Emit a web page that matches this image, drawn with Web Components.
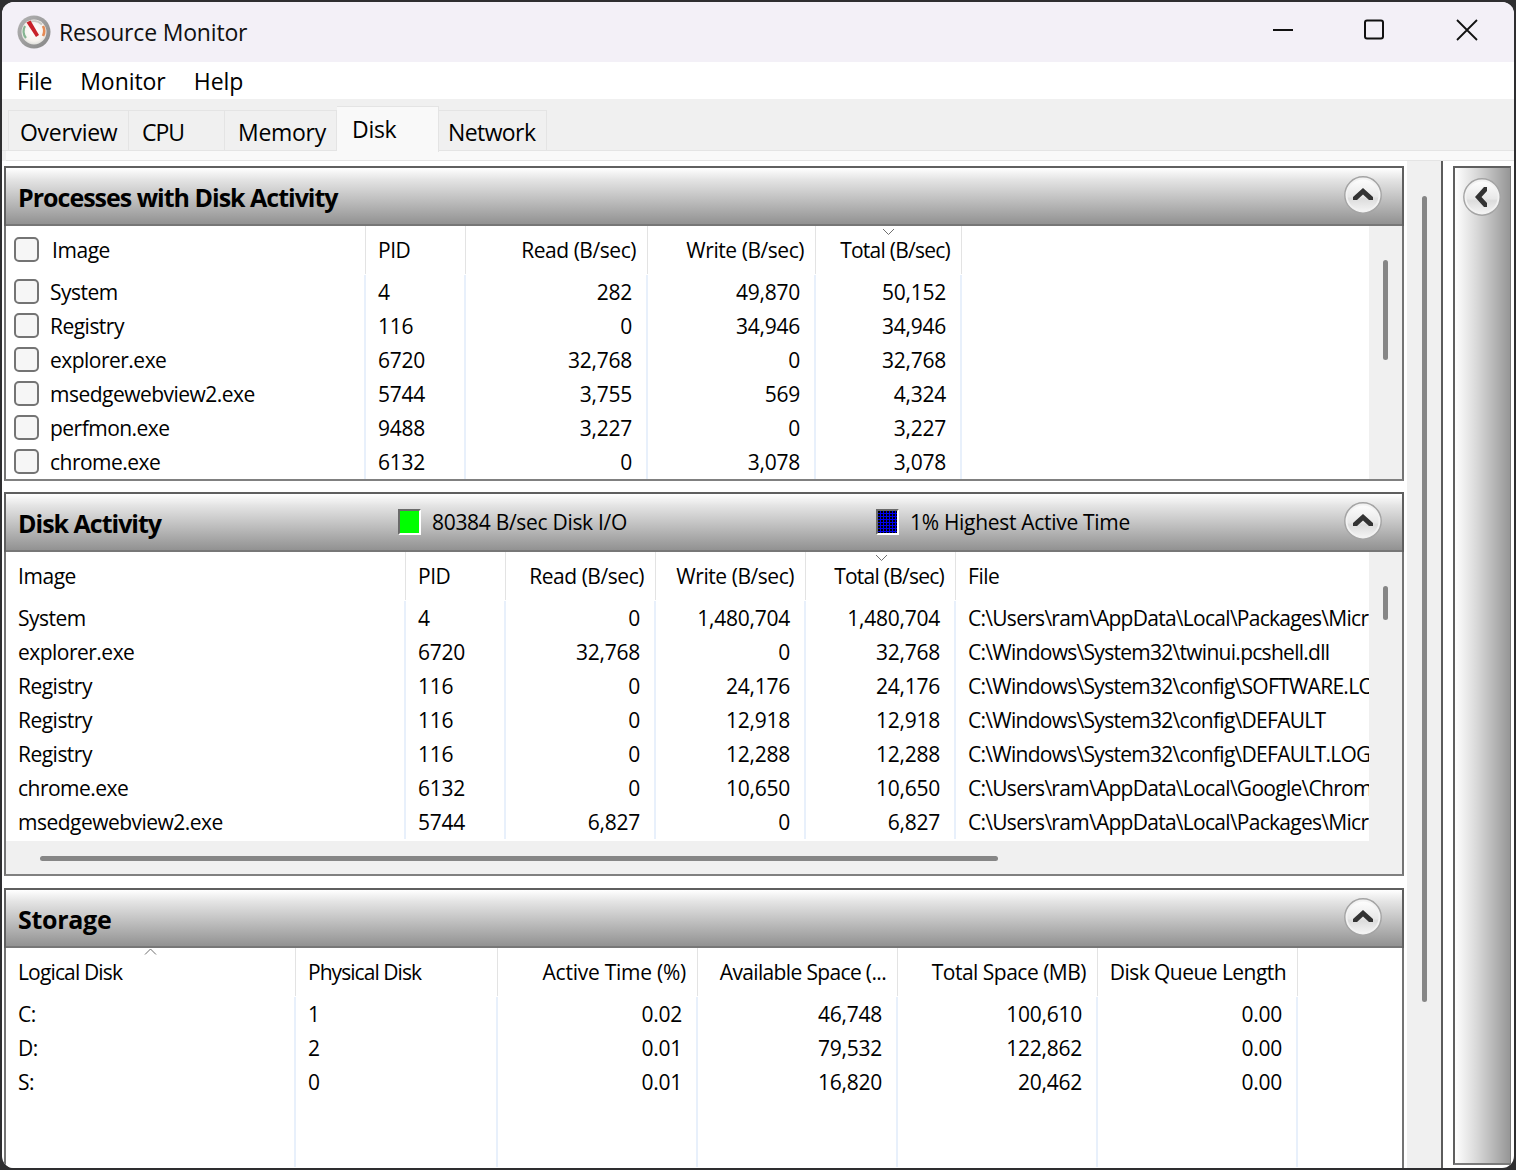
<!DOCTYPE html>
<html lang="en">
<head>
<meta charset="utf-8">
<title>Resource Monitor</title>
<style>
  html, body { margin: 0; height: 100%; background: #2e2e30; overflow: hidden; }
  body { font-family: "Open Sans", "Noto Sans", sans-serif; color: #000; }
</style>
</head>
<body>
<rm-window>
  <rm-titlebar slot="title">Resource Monitor</rm-titlebar>
  <rm-menubar slot="menu"></rm-menubar>
  <rm-tabs slot="tabs"></rm-tabs>

  <rm-panel style="height:315px" heading="Processes with Disk Activity">
    <rm-table id="processes" checks thumb-top="34" thumb-size="100"></rm-table>
  </rm-panel>

  <rm-panel style="height:384px; margin-top:11px" heading="Disk Activity">
    <rm-legend slot="legend" color="green" style="width:478px">80384 B/sec Disk I/O</rm-legend>
    <rm-legend slot="legend" color="blue">1% Highest Active Time</rm-legend>
    <rm-table id="activity" thumb-top="34" thumb-size="34" hscroll></rm-table>
  </rm-panel>

  <rm-panel style="flex:1; margin-top:12px" heading="Storage" heading-spacing="-.3" open-bottom>
    <rm-table id="storage"></rm-table>
  </rm-panel>
</rm-window>

<script>
class RmWindow extends HTMLElement {
  constructor() {
    super();
    this.attachShadow({ mode: 'open' });
    this.shadowRoot.innerHTML = `
      <style>
        :host {
          display: flex;
          flex-direction: column;
          width: 1512px;
          height: 1166px;
          margin: 2px 0 0 2px;
          background: #fff;
          border-radius: 12px;
          overflow: hidden;
        }
        .main { flex: 1; display: flex; min-height: 0; }
        .panels {
          flex: none;
          width: 1400px;
          margin: 5px 0 0 2px;
          display: flex;
          flex-direction: column;
          min-height: 0;
        }
        .outer-scroll {
          flex: none;
          width: 34px;
          margin-left: 3px;
          background: #f0f0f0;
          border-right: 2px solid #5c5c5c;
          display: flex;
          justify-content: center;
        }
        .outer-scroll i {
          display: block;
          width: 5px;
          height: 806px;
          margin-top: 35px;
          background: #868686;
          border-radius: 3px;
        }
        .side {
          flex: 1;
          margin: 5px 3px 3px 10px;
          border: 2px solid #5f5f5f;
          border-right: 1px solid #7a7a7a;
          border-bottom-color: #7a7a7a;
          background: linear-gradient(to right, #fff 0%, #d8d8d8 40%, #969696 100%);
          display: flex;
          justify-content: center;
          padding: 10px 2px 0 0;
          align-items: flex-start;
        }
      </style>
      <slot name="title"></slot>
      <slot name="menu"></slot>
      <slot name="tabs"></slot>
      <div class="main">
        <div class="panels"><slot></slot></div>
        <div class="outer-scroll"><i></i></div>
        <div class="side"><rm-round-button direction="left"></rm-round-button></div>
      </div>
    `;
  }
}

class RmTitlebar extends HTMLElement {
  constructor() {
    super();
    this.attachShadow({ mode: 'open' });
    this.shadowRoot.innerHTML = `
      <style>
        :host {
          display: flex;
          align-items: center;
          height: 60px;
          background: #f3f0f7;
          font-size: 23px;
        }
        .icon { flex: none; margin: 0 7px 0 14px; }
        .text { flex: 1; letter-spacing: -.18px; color: #111; }
        .controls { display: flex; align-items: center; margin-right: 1px; }
        button {
          all: unset;
          display: flex;
          justify-content: center;
          align-items: center;
          width: 92px;
          height: 56px;
          margin-bottom: 4px;
        }
        .max { position: relative; left: -1px; }
      </style>
      <svg class="icon" width="36" height="36" viewBox="0 0 36 36">
        <defs>
          <linearGradient id="ring" x1="0" y1="0" x2="1" y2="1">
            <stop offset="0" stop-color="#b4b4b4"/>
            <stop offset="1" stop-color="#868686"/>
          </linearGradient>
          <radialGradient id="face" cx=".5" cy=".45" r=".6">
            <stop offset="0" stop-color="#fff"/>
            <stop offset=".7" stop-color="#f6f2ee"/>
            <stop offset="1" stop-color="#d6d8d4"/>
          </radialGradient>
        </defs>
        <circle cx="18" cy="18" r="16.5" fill="url(#ring)"/>
        <circle cx="18" cy="18" r="12.5" fill="url(#face)"/>
        <path d="M9 12a11 11 0 0 0 1 12" fill="none" stroke="#86b592" stroke-width="2.2"/>
        <path d="M13 8.5a11 11 0 0 1 13 2" fill="none" stroke="#c9c9c4" stroke-width="2"/>
        <path d="M27 12a11 11 0 0 1 0 10" fill="none" stroke="#e58a55" stroke-width="2.6"/>
        <path d="M10.5 8.5 L14.5 6.5 L23 21 L20 23 Z" fill="#c8222a"/>
      </svg>
      <span class="text"><slot></slot></span>
      <div class="controls">
        <button aria-label="Minimize">
          <svg width="22" height="22" viewBox="0 0 22 22"><path d="M1 11h20" stroke="#111" stroke-width="2"/></svg>
        </button>
        <button class="max" aria-label="Maximize">
          <svg width="22" height="22" viewBox="0 0 22 22"><rect x="2" y="1.5" width="18" height="18" rx="2" fill="none" stroke="#111" stroke-width="2"/></svg>
        </button>
        <button aria-label="Close">
          <svg width="22" height="22" viewBox="0 0 22 22"><path d="M1 1l20 20M21 1L1 21" stroke="#111" stroke-width="1.8"/></svg>
        </button>
      </div>
    `;
  }
}

class RmMenubar extends HTMLElement {
  constructor() {
    super();
    this.attachShadow({ mode: 'open' });
    this.shadowRoot.innerHTML = `
      <style>
        :host {
          display: flex;
          align-items: center;
          gap: 28px;
          height: 37px;
          padding-left: 15px;
          background: #fff;
          font-size: 23px;
          letter-spacing: -.05px;
        }
        .file { letter-spacing: -.3px; }
      </style>
      <span class="file">File</span><span>Monitor</span><span>Help</span>
    `;
  }
}

class RmTabs extends HTMLElement {
  #tabs = [
    { label: 'Overview', width: 121, pad: 11, spacing: -.3 },
    { label: 'CPU', width: 96, pad: 13, spacing: -1 },
    { label: 'Memory', width: 112, pad: 13, spacing: -.3 },
    { label: 'Disk', width: 102, pad: 15, spacing: -.3, active: true },
    { label: 'Network', width: 108, pad: 9, spacing: -.6 },
  ];

  constructor() {
    super();
    this.attachShadow({ mode: 'open' });
    const tabs = this.#tabs.map((t) => `
      <div class="tab${t.active ? ' active' : ''}" style="width:${t.width}px;padding-left:${t.pad}px;letter-spacing:${t.spacing}px">${t.label}</div>
    `).join('');
    this.shadowRoot.innerHTML = `
      <style>
        :host {
          display: block;
          background: #f0f0f0;
          font-size: 23px;
        }
        .strip {
          display: flex;
          align-items: flex-end;
          height: 52px;
          padding-left: 6px;
          box-sizing: border-box;
          border-bottom: 1px solid #e4e4e4;
        }
        .tab {
          box-sizing: border-box;
          height: 40px;
          padding-top: 4px;
          line-height: 34px;
          border: 1px solid #e4e4e4;
          border-bottom: 0;
          white-space: nowrap;
        }
        .tab + .tab { border-left: 0; }
        .active {
          height: 46px;
          margin-bottom: -2px;
          padding-top: 5px;
          background: #f9f9f9;
          position: relative;
          border-left: 1px solid #e4e4e4;
        }
        .page {
          height: 9px;
          margin: 0 0 0 4px;
          background: #f9f9f9;
          border-bottom: 1px solid #e4e4e4;
        }
      </style>
      <div class="strip">${tabs}</div>
      <div class="page"></div>
    `;
  }
}

class RmRoundButton extends HTMLElement {
  constructor() {
    super();
    this.attachShadow({ mode: 'open' });
    const turn = this.getAttribute('direction') === 'left' ? 'rotate(-90 19 19)' : '';
    this.shadowRoot.innerHTML = `
      <style>
        :host { display: block; width: 38px; height: 38px; flex: none; }
        svg { display: block; }
      </style>
      <svg width="38" height="38" viewBox="0 0 38 38">
        <defs>
          <linearGradient id="b" x1="0" y1="0" x2="0" y2="1">
            <stop offset="0" stop-color="#fdfdfd"/>
            <stop offset=".55" stop-color="#e8e8e8"/>
            <stop offset=".62" stop-color="#dcdcdc"/>
            <stop offset="1" stop-color="#f2f2f2"/>
          </linearGradient>
        </defs>
        <circle cx="19" cy="19" r="18.2" fill="#f2f2f2" stroke="#a4a4a4" stroke-width="1.4"/>
        <circle cx="19" cy="19" r="15.6" fill="url(#b)"/>
        <path transform="${turn}" d="M19 12 L29 21 L29 24 L25 24 L19 18.5 L13 24 L9 24 L9 21 Z" fill="#333"/>
      </svg>
    `;
  }
}

class RmLegend extends HTMLElement {
  constructor() {
    super();
    this.attachShadow({ mode: 'open' });
    const blue = this.getAttribute('color') === 'blue';
    const fill = blue
      ? 'background: radial-gradient(circle at 1px 1px, #000 .9px, transparent 1px) 0 0/3px 3px, #0000f0;'
      : 'background: #00ff00;';
    this.shadowRoot.innerHTML = `
      <style>
        :host {
          display: flex;
          align-items: center;
          gap: 11px;
          font-size: 21px;
          letter-spacing: -.3px;
          white-space: nowrap;
        }
        .swatch {
          width: 19px;
          height: 22px;
          border: 2px solid;
          border-color: #6a6a6a #fff #fff #6a6a6a;
          ${fill}
        }
      </style>
      <span class="swatch"></span><span><slot></slot></span>
    `;
  }
}

class RmPanel extends HTMLElement {
  constructor() {
    super();
    this.attachShadow({ mode: 'open' });
    const bottom = this.hasAttribute('open-bottom') ? '0' : '2px solid #808080';
    const spacing = this.getAttribute('heading-spacing') || '-1';
    this.shadowRoot.innerHTML = `
      <style>
        :host {
          display: flex;
          flex-direction: column;
          box-sizing: border-box;
          min-height: 0;
          border-left: 2px solid #747474;
          border-right: 2px solid #747474;
          border-bottom: ${bottom};
        }
        header {
          flex: none;
          display: grid;
          grid-template-columns: 380px 1fr 38px;
          align-items: center;
          box-sizing: border-box;
          height: 60px;
          margin: 0 -2px;
          padding: 0 20px 4px 12px;
          border: 2px solid #5f5f5f;
          border-width: 2px 2px 0;
          background: linear-gradient(#fff, #e4e4e4 20%, #b4b4b4 65%, #8e8e8e);
          box-shadow: inset 0 -2px 0 #777;
        }
        h2 {
          margin: 0;
          font-size: 25px;
          font-weight: 700;
          letter-spacing: ${spacing}px;
          white-space: nowrap;
          position: relative;
          top: 2px;
        }
        .legend { display: flex; position: relative; top: 1px; }
        .body { flex: 1; display: flex; min-height: 0; }
        ::slotted(rm-table) { flex: 1; }
      </style>
      <header>
        <h2>${this.getAttribute('heading')}</h2>
        <div class="legend"><slot name="legend"></slot></div>
        <rm-round-button></rm-round-button>
      </header>
      <div class="body"><slot></slot></div>
    `;
  }
}

class RmCheckbox extends HTMLElement {
  constructor() {
    super();
    this.attachShadow({ mode: 'open' });
    this.shadowRoot.innerHTML = `
      <style>
        :host {
          display: block;
          box-sizing: border-box;
          flex: none;
          width: 25px;
          height: 25px;
          margin-top: -2px;
          background: #f6f6f6;
          border: 2px solid #747474;
          border-radius: 5px;
        }
      </style>
    `;
  }
}

class RmTable extends HTMLElement {
  #data;

  constructor() {
    super();
    this.attachShadow({ mode: 'open' });
  }

  set data(value) {
    this.#data = value;
    this.#render();
  }

  get #style() {
    return `
      <style>
        :host {
          display: grid;
          grid-template-columns: 1fr auto;
          grid-template-rows: 1fr auto;
          min-height: 0;
          font-size: 21px;
          letter-spacing: -.52px;
          background: #fff;
        }
        .view { overflow: hidden; min-width: 0; }
        .row { display: flex; height: 34px; }
        .row.head { height: 49px; }
        .cell {
          box-sizing: border-box;
          flex: none;
          display: flex;
          align-items: center;
          height: 100%;
          padding: 0 14px 0 12px;
          white-space: nowrap;
          overflow: hidden;
          border-right: 2px solid #e8f0fb;
          position: relative;
        }
        .num { letter-spacing: -.25px; }
        .head .cell {
          height: 48px;
          padding: 0 11px 0 12px;
          border-right: 1px solid #e3e3e3;
          letter-spacing: -.45px;
        }
        .right { justify-content: flex-end; }
        .check { padding-left: 8px; gap: 11px; }
        .head .check { padding-left: 8px; gap: 13px; }
        .sort { position: absolute; }
        .vbar {
          width: 33px;
          background: #f0f0f0;
          display: flex;
          justify-content: center;
        }
        .vbar i {
          display: block;
          width: 5px;
          background: #868686;
          border-radius: 3px;
        }
        .hbar {
          grid-column: 1 / 3;
          height: 33px;
          background: #f0f0f0;
          display: flex;
          align-items: center;
        }
        .hbar i {
          display: block;
          width: 958px;
          height: 5px;
          margin: 1px 0 0 34px;
          background: #868686;
          border-radius: 3px;
        }
      </style>
    `;
  }

  #sortMark(col) {
    if (!col.sort) return '';
    const up = col.sort === 'up';
    const d = up ? 'M1 6.5 L6.5 1 L12 6.5' : 'M1 1 L6.5 6.5 L12 1';
    return `<svg class="sort" style="left:${col.sortAt}px;top:${up ? 0 : 2}px" width="13" height="8" viewBox="0 0 13 8"><path d="${d}" fill="none" stroke="#6f6f6f" stroke-width="1"/></svg>`;
  }

  #cell(col, text, isHead, first) {
    const check = first && this.hasAttribute('checks');
    const cls = ['cell'];
    if (col.right) cls.push('right');
    if (col.right || col.num) cls.push('num');
    if (check) cls.push('check');
    const box = check ? '<rm-checkbox></rm-checkbox>' : '';
    const mark = isHead ? this.#sortMark(col) : '';
    let style = `width:${col.width}px`;
    if (isHead && col.headSpacing) style += `;letter-spacing:${col.headSpacing}px`;
    if (!isHead && col.spacing) style += `;letter-spacing:${col.spacing}px`;
    return `<div class="${cls.join(' ')}" style="${style}">${box}<span>${text}</span>${mark}</div>`;
  }

  get #template() {
    const { columns, rows } = this.#data;
    const head = columns.map((c, i) => this.#cell(c, c.label, true, i === 0)).join('');
    const body = rows.map((r) => `
      <div class="row">${r.map((t, i) => this.#cell(columns[i], t, false, i === 0)).join('')}</div>
    `).join('');
    const top = this.getAttribute('thumb-top');
    const vbar = top
      ? `<div class="vbar"><i style="margin-top:${top}px;height:${this.getAttribute('thumb-size')}px"></i></div>`
      : '';
    const hbar = this.hasAttribute('hscroll') ? '<div class="hbar"><i></i></div>' : '';
    return `
      ${this.#style}
      <div class="view">
        <div class="row head">${head}</div>
        ${body}
      </div>
      ${vbar}
      ${hbar}
    `;
  }

  #render() {
    this.shadowRoot.innerHTML = this.#template;
  }
}

customElements.define('rm-window', RmWindow);
customElements.define('rm-titlebar', RmTitlebar);
customElements.define('rm-menubar', RmMenubar);
customElements.define('rm-tabs', RmTabs);
customElements.define('rm-round-button', RmRoundButton);
customElements.define('rm-legend', RmLegend);
customElements.define('rm-panel', RmPanel);
customElements.define('rm-checkbox', RmCheckbox);
customElements.define('rm-table', RmTable);

document.querySelector('#processes').data = {
  columns: [
    { label: 'Image', width: 360 },
    { label: 'PID', width: 100, num: true },
    { label: 'Read (B/sec)', width: 182, right: true },
    { label: 'Write (B/sec)', width: 168, right: true },
    { label: 'Total (B/sec)', width: 146, right: true, headSpacing: -.75, sort: 'down', sortAt: 66 },
  ],
  rows: [
    ['System', '4', '282', '49,870', '50,152'],
    ['Registry', '116', '0', '34,946', '34,946'],
    ['explorer.exe', '6720', '32,768', '0', '32,768'],
    ['msedgewebview2.exe', '5744', '3,755', '569', '4,324'],
    ['perfmon.exe', '9488', '3,227', '0', '3,227'],
    ['chrome.exe', '6132', '0', '3,078', '3,078'],
  ],
};

document.querySelector('#activity').data = {
  columns: [
    { label: 'Image', width: 400 },
    { label: 'PID', width: 100, num: true },
    { label: 'Read (B/sec)', width: 150, right: true },
    { label: 'Write (B/sec)', width: 150, right: true },
    { label: 'Total (B/sec)', width: 150, right: true, headSpacing: -.75, sort: 'down', sortAt: 69 },
    { label: 'File', width: 420, spacing: -.72 },
  ],
  rows: [
    ['System', '4', '0', '1,480,704', '1,480,704', 'C:\\Users\\ram\\AppData\\Local\\Packages\\Microsoft'],
    ['explorer.exe', '6720', '32,768', '0', '32,768', 'C:\\Windows\\System32\\twinui.pcshell.dll'],
    ['Registry', '116', '0', '24,176', '24,176', 'C:\\Windows\\System32\\config\\SOFTWARE.LOG1'],
    ['Registry', '116', '0', '12,918', '12,918', 'C:\\Windows\\System32\\config\\DEFAULT'],
    ['Registry', '116', '0', '12,288', '12,288', 'C:\\Windows\\System32\\config\\DEFAULT.LOG1'],
    ['chrome.exe', '6132', '0', '10,650', '10,650', 'C:\\Users\\ram\\AppData\\Local\\Google\\Chrome'],
    ['msedgewebview2.exe', '5744', '6,827', '0', '6,827', 'C:\\Users\\ram\\AppData\\Local\\Packages\\Microsoft'],
  ],
};

document.querySelector('#storage').data = {
  columns: [
    { label: 'Logical Disk', width: 290, headSpacing: -.85, sort: 'up', sortAt: 138 },
    { label: 'Physical Disk', width: 202, headSpacing: -.95, num: true },
    { label: 'Active Time (%)', width: 200, right: true, headSpacing: -.25 },
    { label: 'Available Space (...', width: 200, right: true, headSpacing: -.65 },
    { label: 'Total Space (MB)', width: 200, right: true, headSpacing: -.5 },
    { label: 'Disk Queue Length', width: 200, right: true, headSpacing: -.55 },
  ],
  rows: [
    ['C:', '1', '0.02', '46,748', '100,610', '0.00'],
    ['D:', '2', '0.01', '79,532', '122,862', '0.00'],
    ['S:', '0', '0.01', '16,820', '20,462', '0.00'],
    ['', '', '', '', '', ''],
    ['', '', '', '', '', ''],
  ],
};
</script>
</body>
</html>
